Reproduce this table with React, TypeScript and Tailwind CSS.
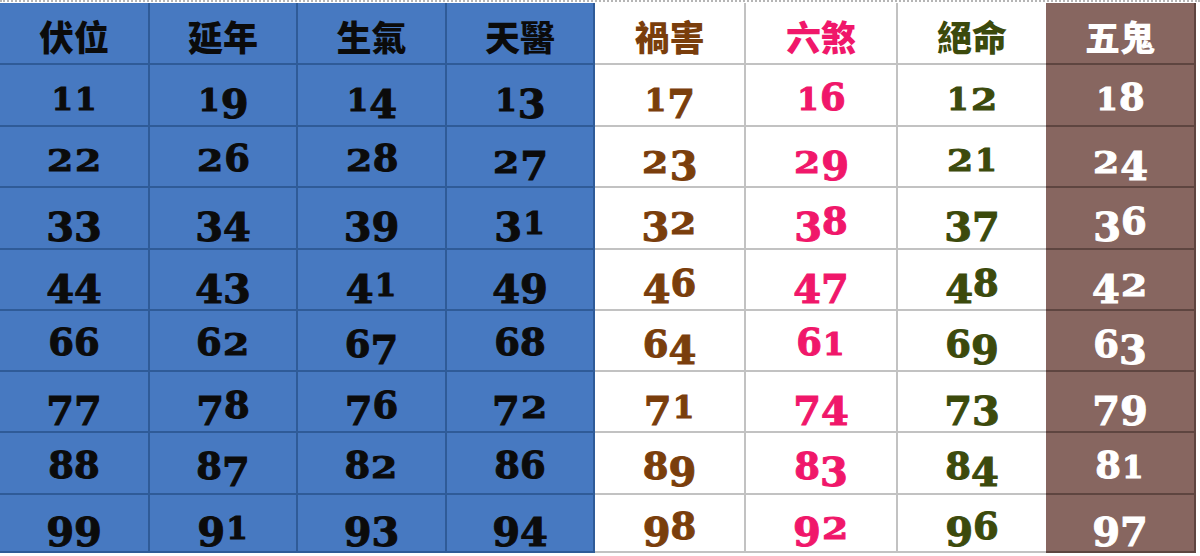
import React from "react";

const cols = [
  { h: "伏位", n: [11, 22, 33, 44, 66, 77, 88, 99], cell: "bg-[#4779c1] border-r-2 border-b-2 border-[#2f5b98]", text: "text-[#0b0b0b]" },
  { h: "延年", n: [19, 26, 34, 43, 62, 78, 87, 91], cell: "bg-[#4779c1] border-r-2 border-b-2 border-[#2f5b98]", text: "text-[#0b0b0b]" },
  { h: "生氣", n: [14, 28, 39, 41, 67, 76, 82, 93], cell: "bg-[#4779c1] border-r-2 border-b-2 border-[#2f5b98]", text: "text-[#0b0b0b]" },
  { h: "天醫", n: [13, 27, 31, 49, 68, 72, 86, 94], cell: "bg-[#4779c1] border-r-2 border-b-2 border-[#2f5b98]", text: "text-[#0b0b0b]" },
  { h: "禍害", n: [17, 23, 32, 46, 64, 71, 89, 98], cell: "bg-white border-r-2 border-b-2 border-[#c2c2c2]", text: "text-[#7a3e0c]" },
  { h: "六煞", n: [16, 29, 38, 47, 61, 74, 83, 92], cell: "bg-white border-r-2 border-b-2 border-[#c2c2c2]", text: "text-[#f0176a]" },
  { h: "絕命", n: [12, 21, 37, 48, 69, 73, 84, 96], cell: "bg-white border-b-2 border-[#c2c2c2]", text: "text-[#3c4a0c]" },
  { h: "五鬼", n: [18, 24, 36, 42, 63, 79, 81, 97], cell: "bg-[#876660] border-r-2 border-b-2 border-[#5e4540]", text: "text-white" },
];

const rowH = ["h-[62px]", "h-[62px]", "h-[61px]", "h-[62px]", "h-[61px]", "h-[61px]", "h-[61px]", "h-[62px]", "h-[58px]"];

function Digits({ value }: { value: number }) {
  const s = String(value);
  return (
    <span className="font-['DejaVu_Serif',serif] font-bold text-[37px] leading-none whitespace-nowrap [-webkit-text-stroke:1px_currentColor]">
      {s.split("").map((c, i) => {
        if (c === "1") {
          return (
            <span key={i} className="text-[31px] px-[1px]">
              {c}
            </span>
          );
        }
        if (c === "2" || c === "0") {
          return (
            <span key={i} className="inline-block text-[29px] scale-x-[1.3] mx-[4px]">
              {c}
            </span>
          );
        }
        if ("34579".includes(c)) {
          return (
            <span key={i} className="inline-block text-[40px] translate-y-[7px]">
              {c}
            </span>
          );
        }
        return <span key={i}>{c}</span>;
      })}
    </span>
  );
}

export default function App() {
  return (
    <div className="w-[1200px] h-[556px] bg-white overflow-hidden">
      <div className="h-[3px] border-t-2 border-dotted border-[#b5b5b5]" />
      <div className="grid grid-cols-[150px_148px_149px_148px_151px_152px_148px_150px]">
        {rowH.map((h, r) =>
          cols.map((c, ci) => (
            <div
              key={`${r}-${ci}`}
              className={`${h} ${c.cell} ${c.text} flex items-center justify-center`}
            >
              {r === 0 ? (
                <span className="font-['Noto_Sans_CJK_TC',sans-serif] font-black text-[35px] leading-none pt-[4px]">
                  {c.h}
                </span>
              ) : (
                <span className="pt-[4px]">
                  <Digits value={c.n[r - 1]} />
                </span>
              )}
            </div>
          ))
        )}
      </div>
    </div>
  );
}
